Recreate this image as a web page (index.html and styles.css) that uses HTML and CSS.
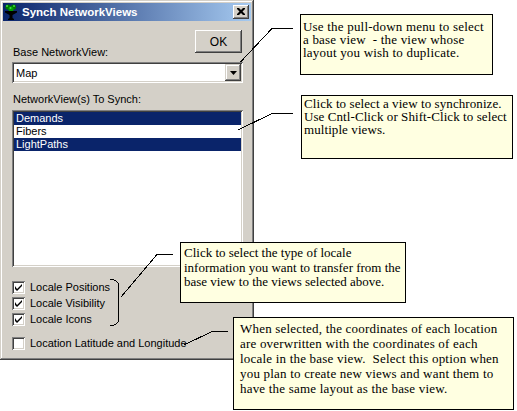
FILE: index.html
```html
<!DOCTYPE html>
<html>
<head>
<meta charset="utf-8">
<title>Synch NetworkViews</title>
<link rel="stylesheet" href="styles.css">
</head>
<body>
<div class="dialog">
  <div class="titlebar">
    <svg class="appicon" width="14" height="16" viewBox="0 0 14 16">
      <circle cx="4" cy="3" r="2.6" fill="#007a00"/>
      <circle cx="9.5" cy="3" r="2.6" fill="#007a00"/>
      <circle cx="7" cy="5" r="2.6" fill="#00a000"/>
      <circle cx="3" cy="2" r="1" fill="#40e040"/>
      <circle cx="10" cy="2" r="1" fill="#40e040"/>
      <circle cx="6.5" cy="4" r="1" fill="#40e040"/>
      <polygon points="1,7 13,7 13,8.5 8.5,11 8.5,14 10,15 10,16 4,16 4,15 5.5,14 5.5,11 1,8.5" fill="#000"/>
    </svg>
    <span class="title">Synch NetworkViews</span>
    <span class="closebtn">
      <svg width="8" height="7" viewBox="0 0 8 7"><path d="M0 0h2l2 2 2-2h2v1l-2.5 2.5L8 6v1H6L4 5 2 7H0V6l2.5-2.5L0 1z" fill="#000"/></svg>
    </span>
  </div>
  <div class="body">
    <div class="toprow">
      <span class="lbl base-lbl">Base NetworkView:</span>
      <span class="btn ok">OK</span>
    </div>
    <div class="combo">
      <span class="combo-text">Map</span>
      <span class="combo-btn"><svg width="7" height="4" viewBox="0 0 7 4"><path d="M0 0h7L3.5 4z" fill="#000"/></svg></span>
    </div>
    <div class="lbl list-lbl">NetworkView(s) To Synch:</div>
    <div class="listbox">
      <div class="item sel">Demands</div>
      <div class="item">Fibers</div>
      <div class="item sel">LightPaths</div>
    </div>
    <div class="checks">
      <div class="chk"><span class="box"><svg width="7" height="7" viewBox="0 0 7 7"><path d="M0 2v3l2 2 5-5V0L2 5z" fill="#000"/></svg></span><span>Locale Positions</span></div>
      <div class="chk"><span class="box"><svg width="7" height="7" viewBox="0 0 7 7"><path d="M0 2v3l2 2 5-5V0L2 5z" fill="#000"/></svg></span><span>Locale Visibility</span></div>
      <div class="chk"><span class="box"><svg width="7" height="7" viewBox="0 0 7 7"><path d="M0 2v3l2 2 5-5V0L2 5z" fill="#000"/></svg></span><span>Locale Icons</span></div>
    </div>
    <div class="chk lat"><span class="box"></span><span>Location Latitude and Longitude</span></div>
  </div>
</div>

<svg class="connectors" width="517" height="411" viewBox="0 0 517 411">
  <g fill="none" stroke="#000" stroke-width="1" shape-rendering="crispEdges">
    <path d="M240.5 62 L272 28.5 L293 28.5"/>
    <path d="M238 130 L272 113.5 L293 113.5"/>
    <path d="M121 297 L157 254.5 L173 254.5"/>
    <path d="M110 279.5 Q118.5 279.5 118.5 286 L118.5 319 Q118.5 325.5 110 325.5"/>
    <path d="M184 345 L212 331.5 L228 331.5"/>
  </g>
</svg>

<div class="callout c1">Use the pull-down menu to select<br>a base view&nbsp; - the view whose<br>layout you wish to duplicate.</div>
<div class="callout c2">Click to select a view to synchronize.<br>Use Cntl-Click or Shift-Click to select<br>multiple views.</div>
<div class="callout c3">Click to select the type of locale<br>information you want to transfer from the<br>base view to the views selected above.</div>
<div class="callout c4">When selected, the coordinates of each location<br>are overwritten with the coordinates of each<br>locale in the base view.&nbsp; Select this option when<br>you plan to create new views and want them to<br>have the same layout as the base view.</div>
</body>
</html>
```

FILE: styles.css
```css
body {
  margin: 0;
  background: #fff;
  font-family: "Liberation Sans", Arial, sans-serif;
  font-size: 11px;
  color: #000;
}

.dialog {
  width: 254px;
  height: 360px;
  box-sizing: border-box;
  background: #d4d0c8;
  padding: 3px;
  box-shadow: inset -1px -1px #404040, inset 1px 1px #d4d0c8, inset -2px -2px #808080, inset 2px 2px #fff;
  display: flex;
  flex-direction: column;
}

.titlebar {
  height: 18px;
  background: linear-gradient(to right, #0a246a, #a6caf0);
  display: flex;
  align-items: center;
  padding: 0 2px 0 1px;
}

.appicon {
  flex: none;
}

.title {
  flex: 1;
  color: #fff;
  font-weight: bold;
  font-size: 11.5px;
  margin-left: 4px;
  white-space: nowrap;
}

.closebtn {
  width: 16px;
  height: 14px;
  box-sizing: border-box;
  background: #d4d0c8;
  box-shadow: inset -1px -1px #404040, inset 1px 1px #fff, inset -2px -2px #808080;
  display: flex;
  align-items: center;
  justify-content: center;
  padding-bottom: 1px;
}

.body {
  flex: 1;
  padding: 9px 8px 0 9px;
  display: flex;
  flex-direction: column;
}

.lbl {
  line-height: 13px;
  padding-left: 1px;
  white-space: nowrap;
}

.toprow {
  display: flex;
  justify-content: space-between;
  align-items: flex-start;
}

.base-lbl {
  margin-top: 16px;
}

.btn {
  width: 47px;
  height: 23px;
  box-sizing: border-box;
  background: #d4d0c8;
  box-shadow: inset -1px -1px #404040, inset 1px 1px #fff, inset -2px -2px #808080;
  display: flex;
  align-items: center;
  justify-content: center;
  margin-right: 1px;
  font-size: 12px;
}

.combo {
  margin-top: 3px;
  height: 21px;
  box-sizing: border-box;
  background: #fff;
  box-shadow: inset 1px 1px #808080, inset -1px -1px #fff, inset 2px 2px #404040, inset -2px -2px #d4d0c8;
  padding: 2px;
  display: flex;
  align-items: center;
}

.combo-text {
  flex: 1;
  padding-left: 2px;
}

.combo-btn {
  width: 16px;
  height: 17px;
  box-sizing: border-box;
  background: #d4d0c8;
  box-shadow: inset -1px -1px #404040, inset 1px 1px #d4d0c8, inset -2px -2px #808080, inset 2px 2px #fff;
  display: flex;
  align-items: center;
  justify-content: center;
}

.list-lbl {
  margin-top: 10px;
}

.listbox {
  margin-top: 4px;
  height: 157px;
  box-sizing: border-box;
  background: #fff;
  box-shadow: inset 1px 1px #808080, inset -1px -1px #fff, inset 2px 2px #404040, inset -2px -2px #d4d0c8;
  padding: 2px;
}

.item {
  height: 13px;
  line-height: 13px;
  padding-left: 2px;
}

.item.sel {
  background: #0a246a;
  color: #fff;
}

.checks {
  margin-top: 12px;
}

.chk {
  height: 16px;
  display: flex;
  align-items: center;
  gap: 5px;
  white-space: nowrap;
}

.chk.lat {
  margin-top: 8px;
}

.box {
  width: 13px;
  height: 13px;
  box-sizing: border-box;
  background: #fff;
  box-shadow: inset 1px 1px #808080, inset -1px -1px #fff, inset 2px 2px #404040, inset -2px -2px #d4d0c8;
  display: flex;
  align-items: center;
  justify-content: center;
  flex: none;
}

.connectors {
  position: absolute;
  left: 0;
  top: 0;
  pointer-events: none;
}

.callout {
  position: absolute;
  box-sizing: border-box;
  background: #ffffe1;
  border: 1px solid #000;
  font-family: "Liberation Serif", "Times New Roman", serif;
  font-size: 13px;
  letter-spacing: 0.2px;
  white-space: nowrap;
  color: #000;
}

.c1 {
  left: 300px;
  top: 14px;
  width: 193px;
  height: 61px;
  padding: 5px 2px;
  line-height: 13px;
}

.c2 {
  left: 301px;
  top: 95px;
  width: 212px;
  height: 64px;
  padding: 1px 2px;
  line-height: 13px;
  letter-spacing: 0.08px;
}

.c3 {
  left: 180px;
  top: 242px;
  width: 226px;
  height: 61px;
  padding: 3px 3px;
  line-height: 14.5px;
  letter-spacing: 0;
}

.c4 {
  left: 233px;
  top: 317px;
  width: 281px;
  height: 93px;
  padding: 3px 6px;
  line-height: 15px;
}
```
